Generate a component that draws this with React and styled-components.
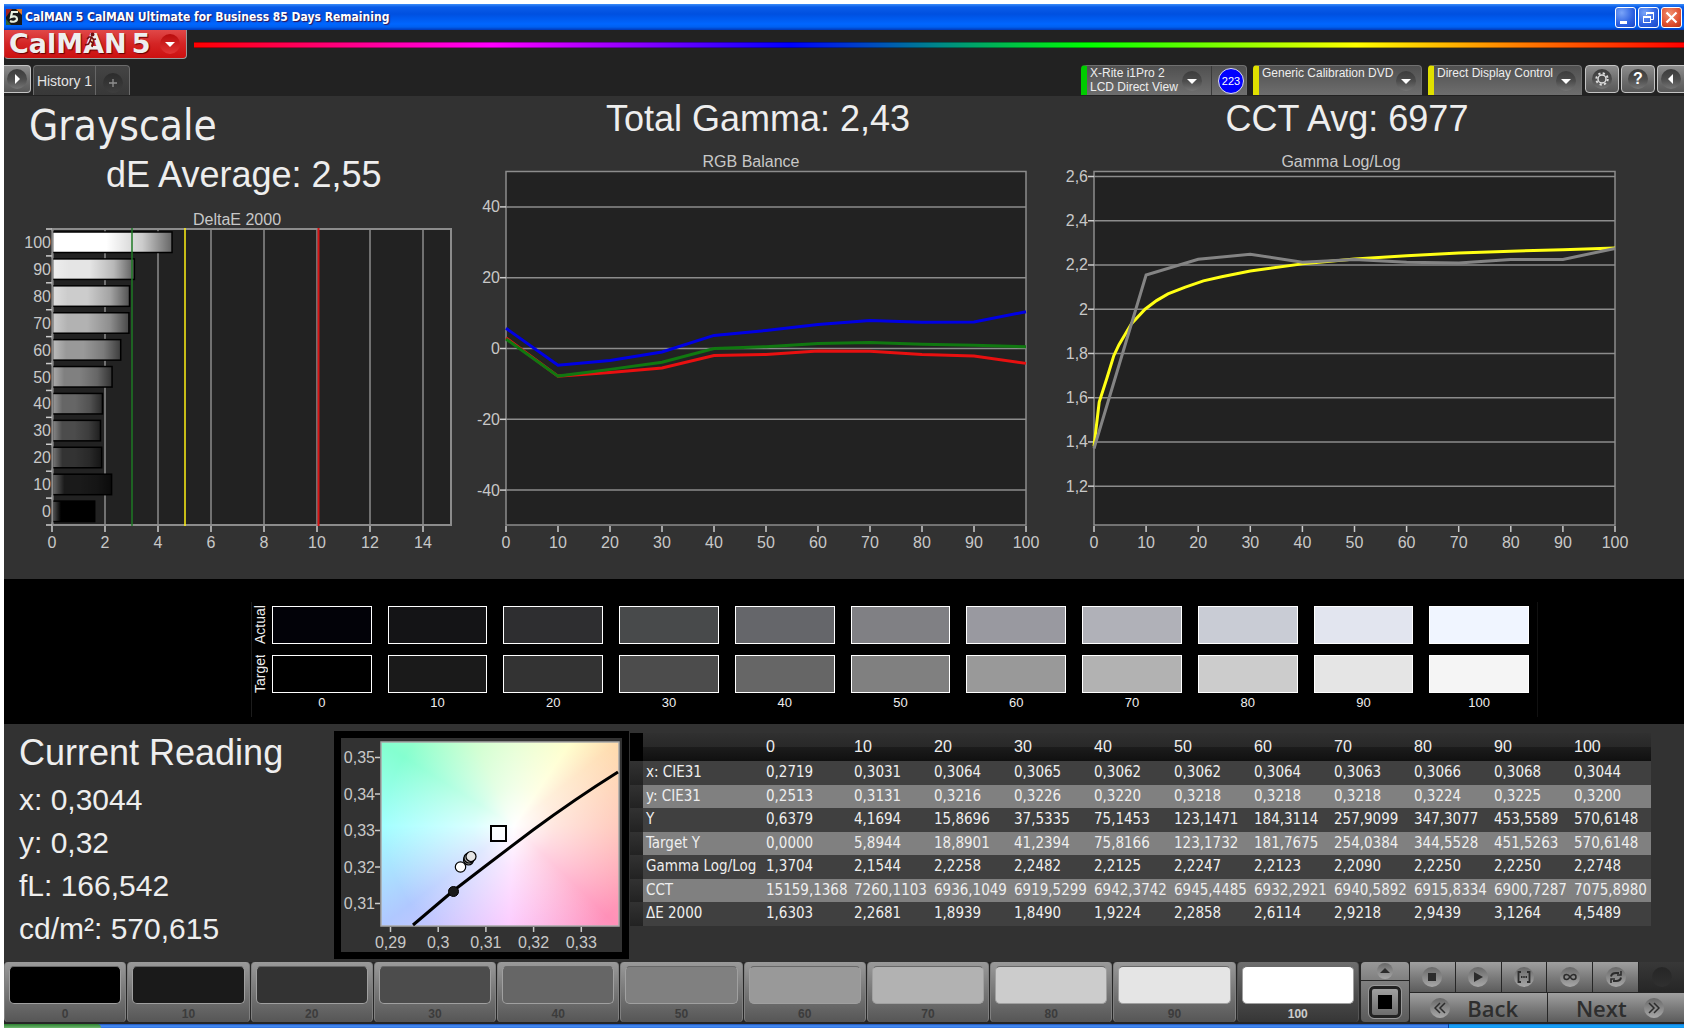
import React from 'react';
import styled, { createGlobalStyle, css } from 'styled-components';

const GlobalStyle = createGlobalStyle`
  * {
    box-sizing: border-box;
  }
  body {
    margin: 0;
    background: #fff;
    font-family: "Liberation Sans", Arial, sans-serif;
    color: #eee;
  }
  button {
    margin: 0;
    padding: 0;
    border: 0;
    font: inherit;
    color: inherit;
    cursor: pointer;
  }
`;

const humanist = '"DejaVu Sans Condensed", "Noto Sans", sans-serif';

const Page = styled.div`
  display: flex;
  flex-direction: column;
  min-height: 100vh;
  padding: 4px 4px 0;
`;

/* ---------- window title ---------- */

const TitleBar = styled.header`
  display: flex;
  align-items: center;
  height: 26px;
  padding: 0 2px;
  background: linear-gradient(#3a8cf8 0, #0a5ce8 3px, #0050e0 10px, #0066ff 20px, #0060f0 23px, #0038b8 26px);
`;

const TitleText = styled.h1`
  flex: 1;
  margin: 0 0 0 3px;
  font-family: ${humanist};
  font-size: 12px;
  font-weight: 700;
  line-height: 20px;
  color: #fff;
  text-shadow: 1px 1px 1px #301050;
  white-space: nowrap;
`;

const WindowButtons = styled.div`
  display: flex;
  gap: 2px;
`;

const WindowButton = styled.button`
  width: 21px;
  height: 21px;
  border: 1px solid #fff;
  border-radius: 3px;
  background: ${({ $close }) =>
    $close
      ? 'radial-gradient(circle at 40% 30%, #f09070, #e05030 60%, #b83010)'
      : 'radial-gradient(circle at 30% 25%, #7aa4f8, #2c60e0 60%, #1848c8)'};
  svg {
    display: block;
  }
`;

/* ---------- application header ---------- */

const AppHeader = styled.div`
  background: #222;
`;

const BrandRow = styled.div`
  display: flex;
  align-items: flex-start;
  gap: 7px;
  height: 35px;
`;

const Knob = styled.span`
  display: flex;
  align-items: center;
  justify-content: center;
  flex: none;
  width: 20px;
  height: 20px;
  border-radius: 50%;
  background: ${({ $tone }) =>
    ({
      dark: 'linear-gradient(#3c3c3c, #4c4c4c 50%, #757575)',
      faint: 'linear-gradient(#2c2c2c, #3e3e3e)',
      red: 'linear-gradient(#b80c0c, #e23434)',
      light: 'linear-gradient(#686868, #a8a8a8)',
      off: 'linear-gradient(#262626, #303030)',
    })[$tone || 'dark']};
`;

const BrandButton = styled.button`
  display: flex;
  align-items: center;
  position: relative;
  flex: none;
  width: 183px;
  height: 29px;
  padding: 0 6px 0 4px;
  border: 1px solid #999;
  border-top: 0;
  border-left-color: #c33;
  border-radius: 0 0 4px 4px;
  background: linear-gradient(#e04848, #d42424 50%, #cc1010);
  ${Knob} {
    margin-left: auto;
  }
`;

const BrandName = styled.span`
  font-family: "DejaVu Sans", sans-serif;
  font-size: 27px;
  font-weight: 700;
  line-height: 28px;
  color: #eee;
  text-shadow: 1px 1px 1px #600;
`;

const BrandVersion = styled(BrandName)`
  margin-left: 5px;
`;

const Runner = styled.svg`
  position: absolute;
  left: 79px;
  top: 2px;
`;

const Spectrum = styled.div`
  flex: 1;
  height: 6px;
  margin-top: 12px;
  border: 1px solid rgba(0, 0, 0, 0.35);
  border-width: 1px 0;
  background: linear-gradient(90deg, #f00 0, #f0a 13%, #f0f 20%, #80f 30%, #00f 40%, #088 50%, #0f0 60%, #ff0 78%, #f80 88%, #f00 100%);
`;

const TabRow = styled.div`
  display: flex;
  align-items: flex-start;
  height: 31px;
`;

const SquareButton = styled.button`
  display: flex;
  align-items: center;
  justify-content: center;
  width: ${({ $width }) => $width || 34}px;
  height: 28px;
  border: 1px solid #c4c4c4;
  border-radius: 4px;
  background: linear-gradient(#8c8c8c, #6a6a6a 60%, #585858);
  ${({ $edge }) => $edge === 'left' && 'border-left: 0; border-radius: 0 4px 4px 0;'}
  ${({ $edge }) => $edge === 'right' && 'border-right: 0; border-radius: 4px 0 0 4px;'}
`;

const HistoryTabs = styled.div`
  display: flex;
  height: 30px;
  margin-left: 2px;
  border: 1px solid #6a6a6a;
  border-bottom: 0;
  border-radius: 4px 4px 0 0;
  background: linear-gradient(#444, #383838);
`;

const HistoryTab = styled.button`
  width: 62px;
  border-right: 1px solid #666;
  background: none;
  font-size: 14px;
  color: #e4e4e4;
  white-space: nowrap;
`;

const AddTab = styled.button`
  display: flex;
  align-items: center;
  justify-content: center;
  width: 33px;
  padding-top: 4px;
  background: none;
`;

const Devices = styled.div`
  display: flex;
  gap: 6px;
  margin-left: auto;
`;

const Device = styled.div`
  display: flex;
  width: ${({ $width }) => $width}px;
  height: 30px;
  border: 1px solid #707070;
  border-width: 1px 1px 0 0;
  border-left: 6px solid ${({ $status }) => $status};
  border-radius: 4px 4px 0 0;
  background: linear-gradient(#505050, #6e6e6e);
`;

const DeviceMenu = styled.button`
  display: flex;
  flex: 1;
  justify-content: space-between;
  padding: 0 ${({ $split }) => ($split ? 9 : 5)}px 0 3px;
  background: none;
  font-size: 12px;
  line-height: 14px;
  text-align: left;
  color: #eee;
  white-space: pre;
  ${Knob} {
    margin-top: 5px;
  }
`;

const DeviceCount = styled.div`
  display: flex;
  align-items: center;
  justify-content: center;
  width: 35px;
  padding-left: 4px;
  border-left: 1px solid #3a3a3a;
`;

const CountBadge = styled.span`
  width: 26px;
  height: 26px;
  border: 1px solid #dde;
  border-radius: 50%;
  background: #00f;
  font-size: 11px;
  line-height: 24px;
  text-align: center;
  color: #fff;
`;

const Tools = styled.div`
  display: flex;
  gap: 2px;
  margin-left: 3px;
`;

/* ---------- workspace ---------- */

const Workspace = styled.main`
  flex: 1;
  background: #323232;
`;

const Charts = styled.section`
  display: grid;
  grid-template-columns: 454fr 600fr 626fr;
`;

const ChartColumn = styled.div`
  min-width: 0;
  padding-top: ${({ $top }) => $top || 0}px;
  padding-right: ${({ $right }) => $right || 0}px;
  svg {
    display: block;
    width: 100%;
    height: auto;
  }
`;

const PageTitle = styled.h2`
  margin: 0 0 0 25px;
  font-family: ${humanist};
  font-size: 42px;
  font-weight: 400;
  line-height: 52px;
`;

const Stat = styled.p`
  margin: 0;
  padding-left: ${({ $indent }) => $indent || 0}px;
  font-size: 36px;
  line-height: 46px;
  text-align: ${({ $indent }) => ($indent ? 'left' : 'center')};
  white-space: nowrap;
`;

const ChartText = styled.text`
  font-family: "Liberation Sans", Arial, sans-serif;
  font-size: 16px;
  fill: #c8c8c8;
`;

const SwatchBand = styled.section`
  height: 145px;
  padding-top: 23px;
  background: #000;
`;

const SwatchPanel = styled.div`
  display: flex;
  gap: 3px;
  height: 115px;
  margin: 0 146px 0 247px;
  padding: 4px 8px 0 0;
  border-left: 1px solid #1c1c1c;
  border-right: 1px solid #111;
`;

const SideLabels = styled.div`
  display: flex;
  flex-direction: column;
  gap: 11px;
  width: 17px;
`;

const SideLabel = styled.span`
  width: 16px;
  height: 38px;
  overflow: hidden;
  writing-mode: vertical-rl;
  transform: rotate(180deg);
  font-size: 14px;
  line-height: 16px;
`;

const SwatchGrid = styled.div`
  display: grid;
  flex: 1;
  grid-template-columns: repeat(11, 1fr);
  grid-template-rows: 38px 11px 38px 19px;
  column-gap: 16px;
`;

const Swatch = styled.div`
  grid-row: ${({ $row }) => $row};
  border: 1px solid #fff;
  background: ${({ $color }) => $color};
`;

const SwatchLabel = styled.span`
  grid-row: 4;
  font-size: 13px;
  line-height: 20px;
  text-align: center;
`;

const Lower = styled.section`
  display: flex;
  align-items: flex-start;
  height: 238px;
`;

const Readings = styled.div`
  flex: none;
  width: 330px;
  padding: 5px 0 0 15px;
`;

const ReadingsTitle = styled.h3`
  margin: 0 0 1px;
  font-size: 36px;
  font-weight: 400;
  line-height: 48px;
`;

const Reading = styled.p`
  margin: 0;
  font-size: 30px;
  line-height: 43px;
`;

const CiePanel = styled.div`
  flex: none;
  width: 295px;
  height: 228px;
  margin-top: 7px;
  border: 7px solid #000;
`;

const CieChart = styled.svg`
  display: block;
  background:
    radial-gradient(circle at 133px 84px, #fff 0, rgba(255, 255, 255, 0.6) 40px, rgba(255, 255, 255, 0) 130px) 40px 4px / 238px 184px no-repeat,
    conic-gradient(from 0deg at 133px 84px, #dcffc4 0deg, #ffffc0 34deg, #ffdcae 51deg, #ffc0b0 90deg, #ff90b8 134deg, #fbc0ff 183deg, #b0c8ff 233deg, #a4ffff 270deg, #84ffd0 302deg, #c0ffc0 335deg, #dcffc4 360deg) 40px 4px / 238px 184px no-repeat;
`;

const DataTable = styled.table`
  flex: 1;
  table-layout: fixed;
  min-width: 0;
  margin: 9px 33px 0 1px;
  border-collapse: collapse;
  font-family: ${humanist};
  font-size: 15px;
  line-height: 20px;

  th,
  td {
    padding: 0 0 2px 3px;
    font-weight: 400;
    text-align: left;
    white-space: nowrap;
  }
  thead th {
    height: 28px;
    padding-bottom: 0;
    font-family: "Liberation Sans", Arial, sans-serif;
    font-size: 16px;
  }
  thead tr {
    background: linear-gradient(#303030, #282828 14px, #1c1c1c 14px, #101010);
  }
  tbody tr {
    height: 23px;
    background: #808080;
  }
  tbody tr:nth-child(odd) {
    height: 24px;
    background: #404040;
  }
`;

const GutterCell = styled.td`
  background: ${({ $head }) => ($head ? '#000' : 'linear-gradient(#323232, #222)')};
`;

/* ---------- bottom bar ---------- */

const BottomBar = styled.footer`
  display: flex;
  gap: 1px;
  height: 62px;
  padding-bottom: 2px;
  background: #262626;
`;

const Levels = styled.div`
  display: flex;
  flex: 1;
  gap: 1px;
`;

const LevelButton = styled.button`
  display: flex;
  flex: 1;
  flex-direction: column;
  justify-content: flex-start;
  min-width: 0;
  padding: 4px 4px 0;
  border: 1px solid ${({ $active }) => ($active ? '#555' : '#808080')};
  border-width: 0 1px;
  border-radius: 4px;
  background: ${({ $active }) =>
    $active ? 'linear-gradient(#6e6e6e, #4a4a4a 60%, #363636)' : 'linear-gradient(#9a9a9a, #707070 60%, #565656)'};
  font-size: 12px;
  font-weight: 700;
  line-height: 18px;
  color: ${({ $active }) => ($active ? '#ccc' : '#3c3c3c')};
`;

const LevelColor = styled.span`
  flex: none;
  align-self: stretch;
  height: 38px;
  border: 1px solid #a0a0a0;
  border-top-color: #686868;
  border-radius: 5px;
  background: ${({ $color }) => $color};
`;

const LevelName = styled.span`
  align-self: center;
  margin-top: 2px;
  line-height: 16px;
`;

const PatternColumn = styled.div`
  display: flex;
  flex-direction: column;
  gap: 1px;
  width: 48px;
  margin-left: 1px;
`;

const face = css`
  display: flex;
  align-items: center;
  justify-content: center;
  background: linear-gradient(#a0a0a0, #7c7c7c 50%, #5c5c5c);
`;

const PatternUp = styled.button`
  ${face}
  height: 18px;
  border-radius: 4px 4px 0 0;
  background: linear-gradient(#989898, #808080);
  ${Knob} {
    width: 16px;
    height: 16px;
  }
`;

const PatternWindow = styled.button`
  ${face}
  flex: 1;
  border-radius: 0 0 4px 4px;
  background: linear-gradient(#808080, #5a5a5a);
`;

const PatternBox = styled.span`
  display: flex;
  align-items: center;
  justify-content: center;
  width: 32px;
  height: 32px;
  border: 3px solid #222;
  border-radius: 5px;
  outline: 1px solid #999;
  background: linear-gradient(#a0a0a0, #6c6c6c);
  &::after {
    content: "";
    width: 14px;
    height: 14px;
    background: #000;
  }
`;

const Transport = styled.div`
  display: grid;
  grid-template-rows: 30px 29px;
  gap: 1px;
  width: 274px;
`;

const TransportRow = styled.div`
  display: grid;
  grid-template-columns: ${({ $columns }) => $columns};
  gap: 1px;
`;

const TransportButton = styled.button`
  ${face}
  ${({ $off }) => $off && 'background: linear-gradient(#383838, #262626);'}
`;

const NavButton = styled.button`
  ${face}
  gap: 17px;
  padding: ${({ $forward }) => ($forward ? '0 0 0 8px' : '0 8px 0 0')};
  font-family: "Open Sans", "Noto Sans", sans-serif;
  font-size: 22px;
  font-weight: 600;
  line-height: 28px;
  color: #2e2e2e;
`;

const Taskbar = styled.div`
  display: flex;
  height: 4px;
  background: linear-gradient(#1c50b8, #4890f4 2px, #3070e0);
`;

const StartEdge = styled.div`
  width: 97px;
  border-radius: 0 4px 0 0;
  background: linear-gradient(#2c8030, #70b870);
`;

const TrayEdge = styled.div`
  width: 236px;
  margin-left: auto;
  border-left: 1px solid #0840a0;
  background: linear-gradient(#1070d0, #18a8f8 2px, #1490f0);
`;

/* ---------- data ---------- */

const levels = [0, 10, 20, 30, 40, 50, 60, 70, 80, 90, 100];

const targetColors = ['#000', '#1a1a1a', '#333', '#4c4c4c', '#666', '#808080', '#999', '#b2b2b2', '#ccc', '#e5e5e5', '#f5f5f5'];
const actualColors = ['#020208', '#141416', '#2e2e30', '#484a4b', '#65666a', '#808084', '#9999a0', '#b0b1b8', '#c9ccd5', '#e2e5ef', '#f0f5ff'];
const levelColors = [...targetColors.slice(0, 10), '#fff'];

const deltaE = [1.6303, 2.2681, 1.8939, 1.849, 1.9224, 2.2858, 2.6114, 2.9218, 2.9439, 3.1264, 4.5489];
const gamma = [1.3704, 2.1544, 2.2258, 2.2482, 2.2125, 2.2247, 2.2123, 2.209, 2.225, 2.225, 2.2748];
const gammaTarget = [
  [0, 1.38], [1, 1.58], [2.5, 1.69], [3.8, 1.79], [4.8, 1.84], [7.2, 1.935], [9.8, 2], [12, 2.039], [14.2, 2.069],
  [17.4, 2.099], [21, 2.128], [24.5, 2.147], [30, 2.173], [40, 2.205], [50, 2.227], [60, 2.242], [70, 2.254],
  [80, 2.262], [90, 2.269], [100, 2.277],
];

const red = [3, -7.8, -6.8, -5.5, -2, -1.7, -0.7, -0.8, -1.7, -2.1, -4.2];
const green = [2.7, -7.8, -5.9, -3.9, 0, 0.5, 1.4, 1.7, 1.2, 0.9, 0.5];
const blue = [5.7, -4.7, -3.4, -1, 3.7, 5.1, 6.8, 7.9, 7.4, 7.5, 10.4];

const rows = [
  ['x: CIE31', '0,2719', '0,3031', '0,3064', '0,3065', '0,3062', '0,3062', '0,3064', '0,3063', '0,3066', '0,3068', '0,3044'],
  ['y: CIE31', '0,2513', '0,3131', '0,3216', '0,3226', '0,3220', '0,3218', '0,3218', '0,3218', '0,3224', '0,3225', '0,3200'],
  ['Y', '0,6379', '4,1694', '15,8696', '37,5335', '75,1453', '123,1471', '184,3114', '257,9099', '347,3077', '453,5589', '570,6148'],
  ['Target Y', '0,0000', '5,8944', '18,8901', '41,2394', '75,8166', '123,1732', '181,7675', '254,0384', '344,5528', '451,5263', '570,6148'],
  ['Gamma Log/Log', '1,3704', '2,1544', '2,2258', '2,2482', '2,2125', '2,2247', '2,2123', '2,2090', '2,2250', '2,2250', '2,2748'],
  ['CCT', '15159,1368', '7260,1103', '6936,1049', '6919,5299', '6942,3742', '6945,4485', '6932,2921', '6940,5892', '6915,8334', '6900,7287', '7075,8980'],
  ['ΔE 2000', '1,6303', '2,2681', '1,8939', '1,8490', '1,9224', '2,2858', '2,6114', '2,9218', '2,9439', '3,1264', '4,5489'],
];

/* ---------- charts ---------- */

const line = '#8c8c8c';

const toPoints = (pairs, sx, sy) => pairs.map(([x, y]) => `${sx(x)},${sy(y)}`).join(' ');

const DeltaChart = () => {
  const sx = (v) => 48 + v * 26.5;
  const slot = 296 / 11;
  return (
    <svg viewBox="0 2 454 381" role="img" aria-label="DeltaE 2000">
      <defs>
        <linearGradient id="shade">
          <stop offset="0" stopColor="#fff" stopOpacity="0.35" />
          <stop offset="0.2" stopColor="#fff" stopOpacity="0" />
          <stop offset="0.45" stopColor="#000" stopOpacity="0" />
          <stop offset="0.75" stopColor="#000" stopOpacity="0.2" />
          <stop offset="1" stopColor="#000" stopOpacity="0.6" />
        </linearGradient>
      </defs>
      <ChartText x="233" y="29" textAnchor="middle">DeltaE 2000</ChartText>
      <rect x="48.5" y="33" width="398.5" height="296" fill="#222" stroke={line} strokeWidth="2" />
      {[0, 2, 4, 6, 8, 10, 12, 14].map((v) => (
        <g key={v}>
          <line x1={sx(v)} x2={sx(v)} y1="33" y2="329" stroke={line} strokeWidth="1.5" />
          <line x1={sx(v)} x2={sx(v)} y1="330" y2="336" stroke="#ccc" strokeWidth="1.5" />
          <ChartText x={sx(v)} y="352" textAnchor="middle">{v}</ChartText>
        </g>
      ))}
      {levels.map((level, i) => {
        const top = 33 + (10 - i) * slot;
        return (
          <g key={level}>
            <line x1="42" x2="48" y1={top} y2={top} stroke="#ccc" strokeWidth="1.5" />
            <rect x="48.5" y={top + 3} width={sx(deltaE[i]) - 49} height="20.5" fill={levelColors[i]} />
            <rect x="48.5" y={top + 3} width={sx(deltaE[i]) - 49} height="20.5" fill="url(#shade)" stroke="#000" strokeWidth="1.5" />
            <ChartText x="47" y={top + 19} textAnchor="end">{level}</ChartText>
          </g>
        );
      })}
      <line x1="42" x2="48" y1="329" y2="329" stroke="#ccc" strokeWidth="1.5" />
      <line x1="48.5" x2="48.5" y1="33" y2="329" stroke={line} strokeWidth="1.5" />
      <line x1={sx(3) + 0.5} x2={sx(3) + 0.5} y1="32" y2="330" stroke="#1e7a24" strokeWidth="2" strokeOpacity="0.75" />
      <line x1={sx(5) + 0.5} x2={sx(5) + 0.5} y1="32" y2="330" stroke="#fff014" strokeWidth="1.5" />
      <line x1={sx(10) + 1.5} x2={sx(10) + 1.5} y1="32" y2="330" stroke="#d81414" strokeWidth="2" />
    </svg>
  );
};

const PercentAxis = ({ sx }) =>
  levels.map((v) => (
    <g key={v}>
      <line x1={sx(v)} x2={sx(v)} y1="386" y2="392" stroke="#ccc" strokeWidth="1.5" />
      <ChartText x={sx(v)} y="408" textAnchor="middle">{v}</ChartText>
    </g>
  ));

const ValueAxis = ({ ticks, sy, left, right }) =>
  ticks.map(([v, label]) => (
    <g key={label}>
      <line x1={left} x2={right} y1={sy(v)} y2={sy(v)} stroke={line} strokeWidth="1.5" />
      <line x1={left - 6} x2={left} y1={sy(v)} y2={sy(v)} stroke="#ccc" strokeWidth="1.5" />
      <ChartText x={left - 6} y={sy(v) + 5.5} textAnchor="end">{label}</ChartText>
    </g>
  ));

const RgbChart = () => {
  const sx = (v) => 48 + v * 5.2;
  const sy = (v) => 208.5 - v * 3.54;
  const ticks = [40, 20, 0, -20, -40].map((v) => [v, String(v)]);
  const series = (values) => toPoints(values.map((v, i) => [i * 10, v]), sx, sy);
  return (
    <svg viewBox="0 2 600 437" role="img" aria-label="RGB Balance">
      <ChartText x="293" y="27" textAnchor="middle">RGB Balance</ChartText>
      <rect x="48" y="31.5" width="520" height="353.5" fill="#222" stroke={line} strokeWidth="1.5" />
      <ValueAxis ticks={ticks} sy={sy} left={48} right={568} />
      <PercentAxis sx={sx} />
      <g fill="none" strokeWidth="3">
        <polyline points={series(red)} stroke="#e81010" />
        <polyline points={series(green)} stroke="#107810" />
        <polyline points={series(blue)} stroke="#0000e4" />
      </g>
    </svg>
  );
};

const GammaChart = () => {
  const sx = (v) => 36 + v * 5.21;
  const sy = (v) => 36.5 + (2.6 - v) * 221.2;
  const ticks = [2.6, 2.4, 2.2, 2, 1.8, 1.6, 1.4, 1.2].map((v) => [v, String(v).replace('.', ',')]);
  return (
    <svg viewBox="0 2 578 437" role="img" aria-label="Gamma Log/Log">
      <ChartText x="283" y="27" textAnchor="middle">Gamma Log/Log</ChartText>
      <rect x="36" y="31.5" width="521" height="353.5" fill="#222" stroke={line} strokeWidth="1.5" />
      <ValueAxis ticks={ticks} sy={sy} left={36} right={557} />
      <PercentAxis sx={sx} />
      <g fill="none" strokeWidth="3">
        <polyline points={toPoints(gammaTarget, sx, sy)} stroke="#ffff14" />
        <polyline points={toPoints(gamma.map((v, i) => [i * 10, v]), sx, sy)} stroke="#848484" />
      </g>
    </svg>
  );
};

const CiePlot = () => (
  <CieChart width="281" height="214" viewBox="0 0 281 214" role="img" aria-label="CIE chromaticity">
    <rect x="40" y="4" width="238" height="184" fill="none" stroke="#a8a8a8" strokeWidth="1.5" />
    {['0,35', '0,34', '0,33', '0,32', '0,31'].map((label, i) => (
      <g key={label}>
        <line x1="34" x2="39" y1={19.5 + i * 36.5} y2={19.5 + i * 36.5} stroke="#ccc" strokeWidth="1.5" />
        <ChartText x="34" y={25 + i * 36.5} textAnchor="end">{label}</ChartText>
      </g>
    ))}
    {['0,29', '0,3', '0,31', '0,32', '0,33'].map((label, i) => (
      <g key={label}>
        <line x1={49.5 + i * 47.7} x2={49.5 + i * 47.7} y1="189" y2="194" stroke="#ccc" strokeWidth="1.5" />
        <ChartText x={49.5 + i * 47.7} y="210" textAnchor="middle">{label}</ChartText>
      </g>
    ))}
    <path d="M72 187L112 153L144.5 128L192 92Q234 61 277 34" fill="none" stroke="#000" strokeWidth="3" />
    <circle cx="112.5" cy="153.5" r="5" fill="#1a1a1a" stroke="#000" />
    <g stroke="#000" strokeWidth="1.2">
      <circle cx="127.5" cy="122" r="5" fill="#888" />
      <circle cx="128" cy="120" r="5" fill="#aaa" />
      <circle cx="130" cy="118.5" r="5" fill="#e4e4e4" />
      <circle cx="119.5" cy="129" r="5.2" fill="#fff" />
    </g>
    <rect x="150" y="88" width="15" height="15" fill="#fff" fillOpacity="0.6" stroke="#000" strokeWidth="2" />
  </CieChart>
);

/* ---------- icons ---------- */

const Triangle = ({ dir = 'down', color = '#fff' }) => {
  const shapes = {
    down: '1,4 11,4 6,9',
    up: '1,8 11,8 6,3',
    left: '8,1 8,11 3,6',
    right: '4,1 4,11 9,6',
  };
  return (
    <svg width="12" height="12" viewBox="0 0 12 12" aria-hidden="true">
      <polygon points={shapes[dir]} fill={color} />
    </svg>
  );
};

const GearIcon = () => (
  <svg width="14" height="14" viewBox="0 0 14 14" fill="none" stroke="#ddd" aria-hidden="true">
    <circle cx="7" cy="7" r="4" strokeWidth="1.5" />
    <circle cx="7" cy="7" r="5.7" strokeWidth="2" strokeDasharray="2.2 2.28" />
  </svg>
);

const HelpMark = styled.span`
  font-size: 16px;
  font-weight: 700;
  line-height: 18px;
  color: #fff;
`;

const ink = '#2c2c2c';

const transportIcons = {
  Stop: <rect x="3" y="3" width="8" height="8" fill={ink} />,
  Play: <polygon points="3,2 12,7 3,12" fill={ink} />,
  Series: (
    <g fill="none" stroke={ink} strokeWidth="1.8">
      <path d="M4 2H1.5V12H4M10 2H12.5V12H10" />
      <path d="M4 7H10" strokeDasharray="1.5 0.75" />
    </g>
  ),
  Loop: (
    <path
      d="M7 7C5.5 4.5 4.5 4.5 3.5 4.5A2.5 2.5 0 0 0 3.5 9.5C5 9.5 5.5 9 7 7S9.5 4.5 10.5 4.5A2.5 2.5 0 0 1 10.5 9.5C9 9.5 8.5 9 7 7"
      fill="none"
      stroke={ink}
      strokeWidth="1.5"
    />
  ),
  Refresh: (
    <g fill="none" stroke={ink} strokeWidth="2">
      <path d="M2 6.5C2.5 4 4.5 3 7 3H10M12 7.5C11.5 10 9.5 11 7 11H4" />
      <path d="M12 1V5H8M2 13V9H6" strokeWidth="1.6" />
    </g>
  ),
};

const Chevrons = ({ flip }) => (
  <svg width="12" height="12" viewBox="0 0 12 12" fill="none" stroke={ink} strokeWidth="1.5" aria-hidden="true">
    <path d={flip ? 'M1 1L6 6L1 11M6 1L11 6L6 11' : 'M6 1L1 6L6 11M11 1L6 6L11 11'} />
  </svg>
);

const App = () => (
  <>
    <GlobalStyle />
    <Page>
      <TitleBar>
        <svg width="16" height="16" viewBox="0 0 16 16" aria-hidden="true">
          <rect width="16" height="16" fill="#181818" />
          <path d="M0 0H6L0 8Z" fill="#a02020" />
          <path d="M16 0V6L10 0Z" fill="#e07828" />
          <path d="M0 16V10L5 16Z" fill="#306030" />
          <path d="M12 3H6L5 8C8 6.5 11 7.5 11 10S7 13.5 4 12" fill="none" stroke="#e8f0e0" strokeWidth="2.2" />
        </svg>
        <TitleText>CalMAN 5 CalMAN Ultimate for Business 85 Days Remaining</TitleText>
        <WindowButtons>
          <WindowButton aria-label="Minimize">
            <svg width="19" height="19"><rect x="4" y="13" width="7" height="3" fill="#fff" /></svg>
          </WindowButton>
          <WindowButton aria-label="Restore">
            <svg width="19" height="19" fill="none" stroke="#fff">
              <path d="M7.5 7V4.5H14.5V11.5H12" />
              <path d="M7 5H15" strokeWidth="2" />
              <rect x="4.5" y="8.5" width="7" height="6" />
              <path d="M4 9H12" strokeWidth="2" />
            </svg>
          </WindowButton>
          <WindowButton $close aria-label="Close">
            <svg width="19" height="19"><path d="M4.5 4.5L14.5 14.5M14.5 4.5L4.5 14.5" stroke="#fff" strokeWidth="2.2" /></svg>
          </WindowButton>
        </WindowButtons>
      </TitleBar>

      <AppHeader>
        <BrandRow>
          <BrandButton>
            <BrandName>CalMAN</BrandName>
            <BrandVersion>5</BrandVersion>
            <Runner width="14" height="16" viewBox="0 0 14 16" fill="none" stroke="#701010" strokeWidth="1.6" aria-hidden="true">
              <circle cx="8.5" cy="2.5" r="1.2" fill="#701010" />
              <path d="M7.5 5L6 9L9 11L8 15M6 9L4.5 12L1 13M3 7L5 5H7.5L9.5 7.5L12 7" />
            </Runner>
            <Knob $tone="red"><Triangle /></Knob>
          </BrandButton>
          <Spectrum />
        </BrandRow>

        <TabRow>
          <SquareButton $width={27} $edge="left" aria-label="Expand">
            <Knob><Triangle dir="right" /></Knob>
          </SquareButton>
          <HistoryTabs>
            <HistoryTab>History 1</HistoryTab>
            <AddTab aria-label="Add history">
              <Knob $tone="faint">
                <svg width="8" height="8"><path d="M4 0V8M0 4H8" stroke="#909090" strokeWidth="1.3" /></svg>
              </Knob>
            </AddTab>
          </HistoryTabs>

          <Devices>
            <Device $width={166} $status="#0c0">
              <DeviceMenu $split>
                {'X-Rite i1Pro 2\nLCD Direct View'}
                <Knob><Triangle /></Knob>
              </DeviceMenu>
              <DeviceCount><CountBadge>223</CountBadge></DeviceCount>
            </Device>
            <Device $width={169} $status="#e0e000">
              <DeviceMenu>
                Generic Calibration DVD
                <Knob><Triangle /></Knob>
              </DeviceMenu>
            </Device>
            <Device $width={154} $status="#e0e000">
              <DeviceMenu>
                Direct Display Control
                <Knob><Triangle /></Knob>
              </DeviceMenu>
            </Device>
          </Devices>
          <Tools>
            <SquareButton aria-label="Settings"><Knob><GearIcon /></Knob></SquareButton>
            <SquareButton aria-label="Help"><Knob><HelpMark>?</HelpMark></Knob></SquareButton>
            <SquareButton $width={27} $edge="right" aria-label="Collapse"><Knob><Triangle dir="left" /></Knob></SquareButton>
          </Tools>
        </TabRow>
      </AppHeader>

      <Workspace>
        <Charts>
          <ChartColumn $top={4}>
            <PageTitle>Grayscale</PageTitle>
            <Stat $indent={102}>dE Average: 2,55</Stat>
            <DeltaChart />
          </ChartColumn>
          <ChartColumn>
            <Stat>Total Gamma: 2,43</Stat>
            <RgbChart />
          </ChartColumn>
          <ChartColumn $right={48}>
            <Stat>CCT Avg: 6977</Stat>
            <GammaChart />
          </ChartColumn>
        </Charts>

        <SwatchBand>
          <SwatchPanel>
            <SideLabels>
              <SideLabel>Actual</SideLabel>
              <SideLabel>Target</SideLabel>
            </SideLabels>
            <SwatchGrid>
              {actualColors.map((color) => <Swatch key={color} $row={1} $color={color} />)}
              {targetColors.map((color) => <Swatch key={color} $row={3} $color={color} />)}
              {levels.map((level) => <SwatchLabel key={level}>{level}</SwatchLabel>)}
            </SwatchGrid>
          </SwatchPanel>
        </SwatchBand>

        <Lower>
          <Readings>
            <ReadingsTitle>Current Reading</ReadingsTitle>
            <Reading>x: 0,3044</Reading>
            <Reading>y: 0,32</Reading>
            <Reading>fL: 166,542</Reading>
            <Reading>cd/m²: 570,615</Reading>
          </Readings>
          <CiePanel>
            <CiePlot />
          </CiePanel>
          <DataTable>
            <colgroup>
              <col width="13" />
              <col width="120" />
              <col width="88" />
              {levels.slice(1).map((level) => <col key={level} />)}
            </colgroup>
            <thead>
              <tr>
                <GutterCell $head />
                <th />
                {levels.map((level) => <th key={level} scope="col">{level}</th>)}
              </tr>
            </thead>
            <tbody>
              {rows.map(([name, ...values]) => (
                <tr key={name}>
                  <GutterCell />
                  <th scope="row">{name}</th>
                  {values.map((value, i) => <td key={levels[i]}>{value}</td>)}
                </tr>
              ))}
            </tbody>
          </DataTable>
        </Lower>
      </Workspace>

      <BottomBar>
        <Levels>
          {levels.map((level, i) => (
            <LevelButton key={level} $active={level === 100}>
              <LevelColor $color={levelColors[i]} />
              <LevelName>{level}</LevelName>
            </LevelButton>
          ))}
        </Levels>
        <PatternColumn>
          <PatternUp aria-label="Patterns"><Knob $tone="light"><Triangle dir="up" color={ink} /></Knob></PatternUp>
          <PatternWindow aria-label="Pattern window"><PatternBox /></PatternWindow>
        </PatternColumn>
        <Transport>
          <TransportRow $columns="repeat(6, 1fr)">
            {Object.entries(transportIcons).map(([name, icon]) => (
              <TransportButton key={name} aria-label={name}>
                <Knob $tone="light"><svg width="14" height="14" viewBox="0 0 14 14">{icon}</svg></Knob>
              </TransportButton>
            ))}
            <TransportButton $off aria-label="Record"><Knob $tone="off" /></TransportButton>
          </TransportRow>
          <TransportRow $columns="1fr 1fr">
            <NavButton><Knob $tone="light"><Chevrons /></Knob>Back</NavButton>
            <NavButton $forward>Next<Knob $tone="light"><Chevrons flip /></Knob></NavButton>
          </TransportRow>
        </Transport>
      </BottomBar>
      <Taskbar>
        <StartEdge />
        <TrayEdge />
      </Taskbar>
    </Page>
  </>
);

export default App;
